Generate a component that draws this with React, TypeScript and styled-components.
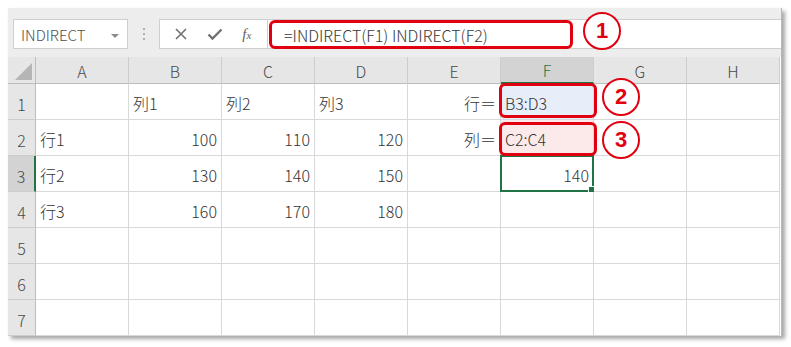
import React from "react";
import styled, { createGlobalStyle, css } from "styled-components";

const GlobalStyle = createGlobalStyle`
  body {
    margin: 0;
    background: #ffffff;
    font-family: "Noto Sans CJK JP", "Noto Sans", sans-serif;
  }
`;

const RED = "#e1000f";
const GREEN = "#217346";

type CellData = {
  text?: string;
  right?: boolean;
  fill?: "blue" | "pink";
  selected?: boolean;
};

const columns = ["A", "B", "C", "D", "E", "F", "G", "H"];

const rows: CellData[][] = [
  [{}, { text: "列1" }, { text: "列2" }, { text: "列3" }, { text: "行＝", right: true }, { text: "B3:D3", fill: "blue" }, {}, {}],
  [{ text: "行1" }, { text: "100", right: true }, { text: "110", right: true }, { text: "120", right: true }, { text: "列＝", right: true }, { text: "C2:C4", fill: "pink" }, {}, {}],
  [{ text: "行2" }, { text: "130", right: true }, { text: "140", right: true }, { text: "150", right: true }, {}, { text: "140", right: true, selected: true }, {}, {}],
  [{ text: "行3" }, { text: "160", right: true }, { text: "170", right: true }, { text: "180", right: true }, {}, {}, {}, {}],
  [{}, {}, {}, {}, {}, {}, {}, {}],
  [{}, {}, {}, {}, {}, {}, {}, {}],
  [{}, {}, {}, {}, {}, {}, {}, {}],
];

const App = () => {
  return (
    <React.Fragment>
      <GlobalStyle />
      <Panel>
        <Toolbar>
          <NameBox>
            <span>INDIRECT</span>
            <DropArrow />
          </NameBox>
          <Grip>
            <i />
            <i />
            <i />
          </Grip>
          <FxButtons>
            <svg width="14" height="14" viewBox="0 0 14 14">
              <path d="M2 2 L12 12 M12 2 L2 12" stroke="#707070" strokeWidth="1.6" fill="none" />
            </svg>
            <svg width="16" height="14" viewBox="0 0 16 14">
              <path d="M1.5 7.5 L5.5 11.5 L14.5 2.5" stroke="#707070" strokeWidth="2.4" fill="none" />
            </svg>
            <FxLabel>
              f<sub>x</sub>
            </FxLabel>
          </FxButtons>
          <FormulaInput>=INDIRECT(F1) INDIRECT(F2)</FormulaInput>
        </Toolbar>

        <Sheet>
          <Corner />
          {columns.map((c) => (
            <ColHeader key={`col-${c}`} active={c === "F"}>
              {c}
            </ColHeader>
          ))}
          {rows.map((row, r) => (
            <React.Fragment key={`row-${r}`}>
              <RowHeader active={r === 2}>{r + 1}</RowHeader>
              {row.map((cell, i) => (
                <Cell key={`cell-${r}-${i}`} right={cell.right} fill={cell.fill}>
                  {cell.text}
                  {cell.selected && (
                    <Selection>
                      <Handle />
                    </Selection>
                  )}
                </Cell>
              ))}
            </React.Fragment>
          ))}
        </Sheet>

        <RedBox $left={261} $top={12} $width={304} $height={29} />
        <RedBox $left={491} $top={75} $width={98} $height={35} />
        <RedBox $left={491} $top={114} $width={98} $height={34} />
        <Mark $left={575} $top={4}>1</Mark>
        <Mark $left={594} $top={70}>2</Mark>
        <Mark $left={594} $top={113}>3</Mark>
      </Panel>
    </React.Fragment>
  );
};

const Panel = styled.div`
  position: relative;
  width: 773px;
  margin: 8px;
  background: #ffffff;
  border-right: 1px solid #b8b8b8;
  box-shadow: 3px 3px 4px rgba(0, 0, 0, 0.35);
`;

const Toolbar = styled.div`
  display: flex;
  align-items: flex-start;
  height: 49px;
  box-sizing: border-box;
  padding: 11px 0 0 5px;
  background: #ededed;
`;

const NameBox = styled.div`
  display: flex;
  align-items: center;
  justify-content: space-between;
  width: 115px;
  height: 30px;
  box-sizing: border-box;
  padding: 1px 8px 0 7px;
  background: #ffffff;
  border: 1px solid #cfcfcf;
  color: #505050;
  font-size: 15px;
  font-weight: 300;
`;

const DropArrow = styled.span`
  width: 0;
  height: 0;
  border-left: 4px solid transparent;
  border-right: 4px solid transparent;
  border-top: 4px solid #8a8a8a;
  margin-top: 2px;
`;

const Grip = styled.div`
  display: flex;
  flex-direction: column;
  gap: 3px;
  width: 31px;
  align-items: center;
  padding-top: 9px;

  i {
    width: 2px;
    height: 2px;
    background: #b0b0b0;
  }
`;

const FxButtons = styled.div`
  display: flex;
  align-items: center;
  justify-content: space-around;
  width: 109px;
  height: 30px;
  box-sizing: border-box;
  padding: 0 6px 0 4px;
  background: #ffffff;
  border: 1px solid #cfcfcf;
`;

const FxLabel = styled.span`
  font-family: "Liberation Serif", serif;
  font-style: italic;
  font-size: 15px;
  color: #606060;

  sub {
    font-size: 11px;
    vertical-align: 0;
  }
`;

const FormulaInput = styled.div`
  flex: 1;
  display: flex;
  align-items: center;
  height: 30px;
  box-sizing: border-box;
  padding: 1px 0 0 16px;
  background: #ffffff;
  border: 1px solid #cfcfcf;
  border-left: none;
  border-right: none;
  color: #383838;
  font-size: 16px;
  font-weight: 300;
`;

const Sheet = styled.div`
  display: grid;
  grid-template-columns: 28px repeat(8, 93px);
  grid-template-rows: 27px repeat(7, 36px);
`;

const headerBase = css`
  display: flex;
  justify-content: center;
  box-sizing: border-box;
  background: #e6e6e6;
  color: #4a4a4a;
  font-size: 16px;
  font-weight: 300;
`;

const Corner = styled.div`
  position: relative;
  background: #e6e6e6;
  border-right: 1px solid #bdbdbd;
  border-bottom: 1px solid #bdbdbd;

  &::after {
    content: "";
    position: absolute;
    right: 3px;
    bottom: 3px;
    border-left: 17px solid transparent;
    border-bottom: 17px solid #b5b5b5;
  }
`;

const ColHeader = styled.div<{ active?: boolean }>`
  ${headerBase};
  align-items: center;
  border-right: 1px solid #cdcdcd;
  border-bottom: ${(p) => (p.active ? `2px solid ${GREEN}` : "1px solid #bdbdbd")};
  background: ${(p) => (p.active ? "#d3d3d3" : "#e6e6e6")};
  color: ${(p) => (p.active ? GREEN : "#4a4a4a")};
  padding-top: 1px;
`;

const RowHeader = styled.div<{ active?: boolean }>`
  ${headerBase};
  align-items: flex-end;
  padding-bottom: 3px;
  border-bottom: 1px solid #cdcdcd;
  border-right: ${(p) => (p.active ? `2px solid ${GREEN}` : "1px solid #bdbdbd")};
  background: ${(p) => (p.active ? "#d3d3d3" : "#e6e6e6")};
`;

const Cell = styled.div<{ right?: boolean; fill?: "blue" | "pink" }>`
  position: relative;
  display: flex;
  align-items: center;
  justify-content: ${(p) => (p.right ? "flex-end" : "flex-start")};
  box-sizing: border-box;
  padding: 3px 4px 0 4px;
  border-right: 1px solid #d9d9d9;
  border-bottom: 1px solid #d9d9d9;
  color: #333333;
  font-size: 16px;
  font-weight: 300;
  background: ${(p) => (p.fill === "blue" ? "#e8eef9" : p.fill === "pink" ? "#fce9e9" : "#ffffff")};
`;

const Selection = styled.div`
  position: absolute;
  inset: -1px -1px -1px -1px;
  border: 2px solid ${GREEN};
`;

const Handle = styled.div`
  position: absolute;
  right: -4px;
  bottom: -4px;
  width: 6px;
  height: 6px;
  background: ${GREEN};
  border: 1px solid #ffffff;
`;

const RedBox = styled.div<{ $left: number; $top: number; $width: number; $height: number }>`
  position: absolute;
  left: ${(p) => p.$left}px;
  top: ${(p) => p.$top}px;
  width: ${(p) => p.$width}px;
  height: ${(p) => p.$height}px;
  box-sizing: border-box;
  border: 3px solid ${RED};
  border-radius: 6px;
`;

const Mark = styled.div<{ $left: number; $top: number }>`
  position: absolute;
  left: ${(p) => p.$left}px;
  top: ${(p) => p.$top}px;
  width: 38px;
  height: 38px;
  box-sizing: border-box;
  display: flex;
  align-items: center;
  justify-content: center;
  border: 2.5px solid ${RED};
  border-radius: 50%;
  background: #ffffff;
  color: ${RED};
  font-family: "Liberation Sans", sans-serif;
  font-weight: 700;
  font-size: 22px;
`;

export default App;
